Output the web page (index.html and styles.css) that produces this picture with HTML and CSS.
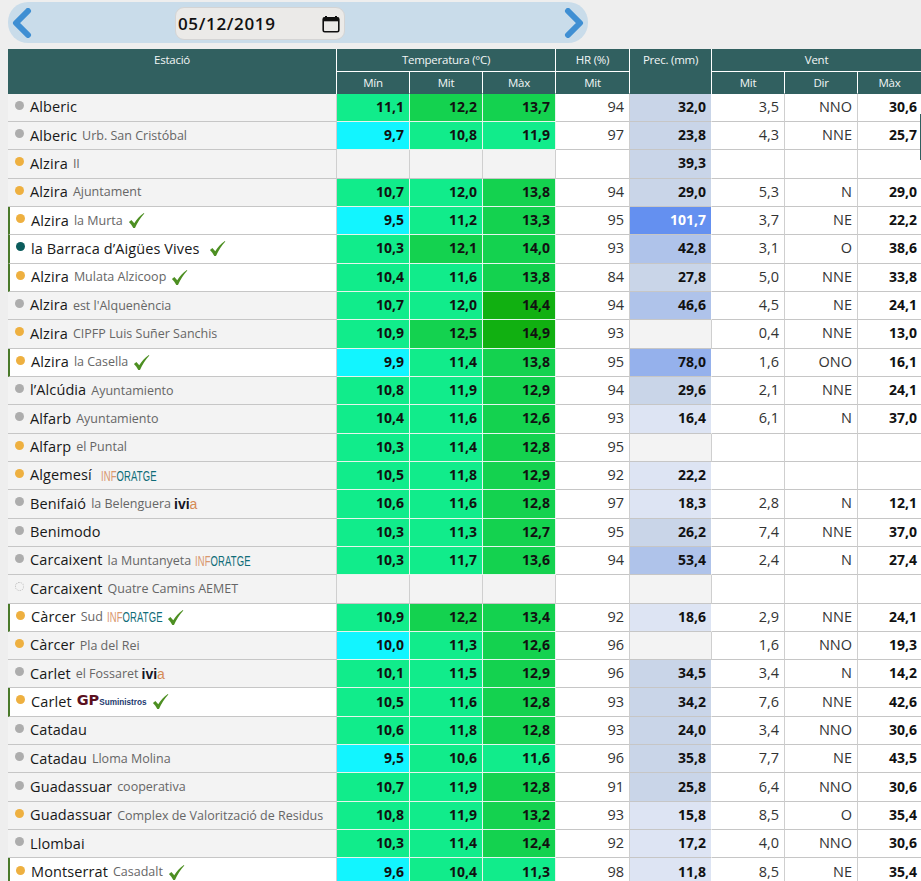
FILE: index.html
```html
<!DOCTYPE html>
<html lang="ca">
<head>
<meta charset="utf-8">
<title>Estacions</title>
<link rel="stylesheet" href="styles.css">
</head>
<body>
<svg class="defs" width="0" height="0" aria-hidden="true"><defs>
<symbol id="ok" viewBox="0 0 18 18"><path d="M1 10.5 L3.6 8.4 L6.6 12 C9 8 12.500 4 16.800 1 L17.300 1.600 C13.200 6 10 11 7.400 17 L5.600 17 C4.400 14.500 2.800 12.300 1 10.500 Z"/></symbol>
</defs></svg>
<nav class="nav">
  <svg class="arrow" viewBox="0 0 20 30"><path d="M16 3 L4 15 L16 27"/></svg>
  <div class="date"><span>05/12/2019</span>
    <svg class="cal" viewBox="0 0 18 18"><path d="M4 1v3M14 1v3" class="cal-p"/><rect x="1.200" y="2.800" width="15.600" height="14" rx="1.500" class="cal-r"/><rect x="1.200" y="2.800" width="15.600" height="3.500" class="cal-f"/></svg>
  </div>
  <svg class="arrow" viewBox="0 0 20 30"><path d="M4 3 L16 15 L4 27"/></svg>
</nav>
<table class="grid">
<colgroup><col class="c-name"><col class="c-n"><col class="c-n"><col class="c-n"><col class="c-h"><col class="c-p"><col class="c-n"><col class="c-n"><col class="c-l"></colgroup>
<thead>
<tr class="h1"><th rowspan="2" class="top">Estació</th><th colspan="3">Temperatura (°C)</th><th>HR (%)</th><th rowspan="2" class="top">Prec. (mm)</th><th colspan="3">Vent</th></tr>
<tr class="h2"><th>Mín</th><th>Mit</th><th>Màx</th><th>Mit</th><th>Mit</th><th>Dir</th><th>Màx</th></tr>
</thead>
<tbody>
<tr><td class="st"><i class="dot g"></i><b>Alberic</b></td><td class="t2">11,1</td><td class="t3">12,2</td><td class="t3">13,7</td><td>94</td><td class="p2">32,0</td><td>3,5</td><td>NNO</td><td class="m">30,6</td></tr>
<tr><td class="st"><i class="dot g"></i><b>Alberic</b><small>Urb. San Cristóbal</small></td><td class="t1">9,7</td><td class="t2">10,8</td><td class="t2">11,9</td><td>97</td><td class="p2">23,8</td><td>4,3</td><td>NNE</td><td class="m">25,7</td></tr>
<tr><td class="st"><i class="dot o"></i><b>Alzira</b><small>II</small></td><td class="t0"></td><td class="t0"></td><td class="t0"></td><td></td><td class="p2">39,3</td><td></td><td></td><td class="m"></td></tr>
<tr><td class="st"><i class="dot o"></i><b>Alzira</b><small>Ajuntament</small></td><td class="t2">10,7</td><td class="t2">12,0</td><td class="t3">13,8</td><td>94</td><td class="p2">29,0</td><td>5,3</td><td>N</td><td class="m">29,0</td></tr>
<tr><td class="st on"><i class="dot o"></i><b>Alzira</b><small>la Murta</small><svg class="ok"><use href="#ok"/></svg></td><td class="t1">9,5</td><td class="t2">11,2</td><td class="t3">13,3</td><td>95</td><td class="p5">101,7</td><td>3,7</td><td>NE</td><td class="m">22,2</td></tr>
<tr><td class="st on"><i class="dot d"></i><b>la Barraca d’Aigües Vives</b><svg class="ok wide"><use href="#ok"/></svg></td><td class="t2">10,3</td><td class="t3">12,1</td><td class="t3">14,0</td><td>93</td><td class="p3">42,8</td><td>3,1</td><td>O</td><td class="m">38,6</td></tr>
<tr><td class="st on"><i class="dot o"></i><b>Alzira</b><small>Mulata Alzicoop</small><svg class="ok"><use href="#ok"/></svg></td><td class="t2">10,4</td><td class="t2">11,6</td><td class="t3">13,8</td><td>84</td><td class="p2">27,8</td><td>5,0</td><td>NNE</td><td class="m">33,8</td></tr>
<tr><td class="st"><i class="dot g"></i><b>Alzira</b><small>est l'Alquenència</small></td><td class="t2">10,7</td><td class="t2">12,0</td><td class="t4">14,4</td><td>94</td><td class="p3">46,6</td><td>4,5</td><td>NE</td><td class="m">24,1</td></tr>
<tr><td class="st"><i class="dot o"></i><b>Alzira</b><small>CIPFP Luis Suñer Sanchis</small></td><td class="t2">10,9</td><td class="t3">12,5</td><td class="t4">14,9</td><td>93</td><td class="p0"></td><td>0,4</td><td>NNE</td><td class="m">13,0</td></tr>
<tr><td class="st on"><i class="dot o"></i><b>Alzira</b><small>la Casella</small><svg class="ok"><use href="#ok"/></svg></td><td class="t1">9,9</td><td class="t2">11,4</td><td class="t3">13,8</td><td>95</td><td class="p4">78,0</td><td>1,6</td><td>ONO</td><td class="m">16,1</td></tr>
<tr><td class="st"><i class="dot g"></i><b>l’Alcúdia</b><small>Ayuntamiento</small></td><td class="t2">10,8</td><td class="t2">11,9</td><td class="t3">12,9</td><td>94</td><td class="p2">29,6</td><td>2,1</td><td>NNE</td><td class="m">24,1</td></tr>
<tr><td class="st"><i class="dot g"></i><b>Alfarb</b><small>Ayuntamiento</small></td><td class="t2">10,4</td><td class="t2">11,6</td><td class="t3">12,6</td><td>93</td><td class="p1">16,4</td><td>6,1</td><td>N</td><td class="m">37,0</td></tr>
<tr><td class="st"><i class="dot o"></i><b>Alfarp</b><small>el Puntal</small></td><td class="t2">10,3</td><td class="t2">11,4</td><td class="t3">12,8</td><td>95</td><td class="p0"></td><td></td><td></td><td class="m"></td></tr>
<tr><td class="st"><i class="dot o"></i><b>Algemesí</b><span class="inf gap"><u>INF</u>ORATGE</span></td><td class="t2">10,5</td><td class="t2">11,8</td><td class="t3">12,9</td><td>92</td><td class="p1">22,2</td><td></td><td></td><td class="m"></td></tr>
<tr><td class="st"><i class="dot g"></i><b>Benifaió</b><small>la Belenguera</small><span class="ivia">ivi<u>a</u></span></td><td class="t2">10,6</td><td class="t2">11,6</td><td class="t3">12,8</td><td>97</td><td class="p1">18,3</td><td>2,8</td><td>N</td><td class="m">12,1</td></tr>
<tr><td class="st"><i class="dot g"></i><b>Benimodo</b></td><td class="t2">10,3</td><td class="t2">11,3</td><td class="t3">12,7</td><td>95</td><td class="p2">26,2</td><td>7,4</td><td>NNE</td><td class="m">37,0</td></tr>
<tr><td class="st"><i class="dot g"></i><b>Carcaixent</b><small>la Muntanyeta</small><span class="inf"><u>INF</u>ORATGE</span></td><td class="t2">10,3</td><td class="t2">11,7</td><td class="t3">13,6</td><td>94</td><td class="p3">53,4</td><td>2,4</td><td>N</td><td class="m">27,4</td></tr>
<tr><td class="st"><i class="dot x"></i><b>Carcaixent</b><small>Quatre Camins AEMET</small></td><td class="t0"></td><td class="t0"></td><td class="t0"></td><td></td><td class="p0"></td><td></td><td></td><td class="m"></td></tr>
<tr><td class="st on"><i class="dot o"></i><b>Càrcer</b><small>Sud</small><span class="inf"><u>INF</u>ORATGE</span><svg class="ok"><use href="#ok"/></svg></td><td class="t2">10,9</td><td class="t3">12,2</td><td class="t3">13,4</td><td>92</td><td class="p1">18,6</td><td>2,9</td><td>NNE</td><td class="m">24,1</td></tr>
<tr><td class="st"><i class="dot o"></i><b>Càrcer</b><small>Pla del Rei</small></td><td class="t1">10,0</td><td class="t2">11,3</td><td class="t3">12,6</td><td>96</td><td class="p0"></td><td>1,6</td><td>NNO</td><td class="m">19,3</td></tr>
<tr><td class="st"><i class="dot g"></i><b>Carlet</b><small>el Fossaret</small><span class="ivia">ivi<u>a</u></span></td><td class="t2">10,1</td><td class="t2">11,5</td><td class="t3">12,9</td><td>96</td><td class="p2">34,5</td><td>3,4</td><td>N</td><td class="m">14,2</td></tr>
<tr><td class="st on"><i class="dot o"></i><b>Carlet</b><span class="gp">GP<em>Suministros</em></span><svg class="ok"><use href="#ok"/></svg></td><td class="t2">10,5</td><td class="t2">11,6</td><td class="t3">12,8</td><td>93</td><td class="p2">34,2</td><td>7,6</td><td>NNE</td><td class="m">42,6</td></tr>
<tr><td class="st"><i class="dot g"></i><b>Catadau</b></td><td class="t2">10,6</td><td class="t2">11,8</td><td class="t3">12,8</td><td>93</td><td class="p2">24,0</td><td>3,4</td><td>NNO</td><td class="m">30,6</td></tr>
<tr><td class="st"><i class="dot g"></i><b>Catadau</b><small>Lloma Molina</small></td><td class="t1">9,5</td><td class="t2">10,6</td><td class="t2">11,6</td><td>96</td><td class="p2">35,8</td><td>7,7</td><td>NE</td><td class="m">43,5</td></tr>
<tr><td class="st"><i class="dot g"></i><b>Guadassuar</b><small>cooperativa</small></td><td class="t2">10,7</td><td class="t2">11,9</td><td class="t3">12,8</td><td>91</td><td class="p2">25,8</td><td>6,4</td><td>NNO</td><td class="m">30,6</td></tr>
<tr><td class="st"><i class="dot o"></i><b>Guadassuar</b><small>Complex de Valorització de Residus</small></td><td class="t2">10,8</td><td class="t2">11,9</td><td class="t3">13,2</td><td>93</td><td class="p1">15,8</td><td>8,5</td><td>O</td><td class="m">35,4</td></tr>
<tr><td class="st"><i class="dot g"></i><b>Llombai</b></td><td class="t2">10,3</td><td class="t2">11,4</td><td class="t3">12,4</td><td>92</td><td class="p1">17,2</td><td>4,0</td><td>NNO</td><td class="m">30,6</td></tr>
<tr><td class="st on"><i class="dot o"></i><b>Montserrat</b><small>Casadalt</small><svg class="ok"><use href="#ok"/></svg></td><td class="t1">9,6</td><td class="t2">10,4</td><td class="t2">11,3</td><td>98</td><td class="p1">11,8</td><td>8,5</td><td>NE</td><td class="m">35,4</td></tr>
</tbody>
</table>
<div class="edge"></div>
</body>
</html>
```
FILE: styles.css
```css
html, body { margin: 0; height: 100%; overflow: hidden; }
body { background: #eeeeee; font-family: "Open Sans", sans-serif; color: #222; padding: 2px 0 0 8px; box-sizing: border-box; }
.defs { position: absolute; }
.edge { position: absolute; left: 920px; top: 114px; width: 1px; height: 46px; background: #2f6060; }
.nav { width: 580px; height: 41px; background: #c9dcea; border-radius: 20px; display: flex; align-items: center; justify-content: space-between; padding: 0 4px; box-sizing: border-box; margin-bottom: 6px; position: relative; }
.arrow { width: 20px; height: 30px; fill: none; stroke: #3f8fd3; stroke-width: 6; stroke-linecap: round; stroke-linejoin: round; }
.date { position: absolute; left: 167px; top: 5px; width: 170px; height: 33px; background: #ebeae8; border: 1px solid #d4d4d4; border-radius: 9px; box-sizing: border-box; display: flex; align-items: center; justify-content: space-between; padding: 0 4px 0 2px; font-size: 17px; font-weight: 600; color: #111; letter-spacing: .65px; }
.cal { width: 18px; height: 18px; }
.cal-p { stroke: #111; stroke-width: 2; fill: none; }
.cal-r { fill: none; stroke: #111; stroke-width: 1.600; }
.cal-f { fill: #111; }
.grid { border-collapse: separate; border-spacing: 0; table-layout: fixed; width: 913px; }
.c-name { width: 329px; } .c-n { width: 73px; } .c-h { width: 74px; } .c-p { width: 82px; } .c-l { width: 63px; }
thead th { background: #316060; color: #f2f6f6; font-weight: 400; font-size: 11.500px; letter-spacing: -.25px; padding: 0; border-right: 1px solid #fff; border-bottom: 1px solid #fff; text-align: center; vertical-align: middle; }
thead th.top { vertical-align: top; padding-top: 3px; line-height: 16px; border-bottom: 0; }
.h1 { height: 23px; }
.h1 th { padding-bottom: 2px; }
.h2 { height: 21.600px; }
.h2 th { border-bottom-color: #316060; padding-top: 1px; }
thead th:last-child { border-right: 0; }
tbody tr { height: 28.330px; }
tbody td { padding: 0 5px 1px 0; background: #fff; border-right: 1px solid #cfcfcf; border-bottom: 1px solid #c6c6c6; font-size: 14.500px; text-align: right; vertical-align: middle; color: #333; white-space: nowrap; box-sizing: border-box; height: 28.330px; line-height: 18px; }
td.t1, td.t2, td.t3, td.t4, td.p1, td.p2, td.p3, td.p4, td.p5, td.m { font-weight: 700; color: #111; font-size: 14px; }
td.t1, td.t2, td.t3, td.t4 { border-right-color: #e6f5ec; border-bottom-color: #e6f5ec; }
td.t0 { background: #f3f3f3; }
td.t1 { background: #12f5ff; }
td.t2 { background: #11ec8b; }
td.t3 { background: #14d24f; }
td.t4 { background: #11b011; }
td.p0 { background: #f3f3f3; border-right-color: #cfcfcf; }
td.p1 { background: #dde4f3; }
td.p2 { background: #c9d5e8; }
td.p3 { background: #afc3ea; }
td.p4 { background: #95b1ec; }
td.p5 { background: #6490f0; color: #fff; }
td.p1, td.p2, td.p3, td.p4, td.p5 { border-right-color: #fff; }
td.m { padding-right: 4px; border-right: 0; }
td.st { background: #f3f3f3; text-align: left; padding: 0 0 1px 7px; color: #666; overflow: hidden; }
td.st.on { background: #fff; border-left: 2px solid #4a7a2a; padding-left: 6px; }
td.st > * { vertical-align: middle; }
.dot { display: inline-block; width: 9px; height: 9px; border-radius: 50%; margin: -4px 6px 0 0; }
.dot.g { background: #adadad; }
.dot.o { background: #eeb040; }
.dot.d { background: #0b5c5c; }
.dot.x { border: 1px dotted #bbb; box-sizing: border-box; }
.st b { font-weight: 400; font-size: 14.500px; color: #181818; letter-spacing: .1px; }
.st small { font-size: 12.500px; color: #666; margin-left: 5px; }
.ok { width: 17px; height: 17px; fill: #4d8f22; margin-left: 5px; }
.ok.wide { margin-left: 10px; }
.inf { display: inline-block; width: 55px; font-family: "Liberation Sans", sans-serif; font-size: 15.500px; color: #0f6c78; margin-left: 4px; transform: scaleX(.61); transform-origin: left center; white-space: nowrap; letter-spacing: .2px; line-height: 18px; }
.inf.gap { margin-left: 9px; }
.inf u { color: #d9986e; text-decoration: none; }
.ivia { font-family: "Liberation Sans", sans-serif; font-size: 14px; font-weight: 700; color: #151525; margin-left: 3px; }
.ivia u { color: #d58a55; text-decoration: none; font-weight: 400; }
.gp { font-family: "DejaVu Sans", sans-serif; font-size: 14.500px; font-weight: 700; color: #5a1020; margin: 3px 0 0 5px; }
.gp em { font-family: "Liberation Sans", sans-serif; font-style: normal; font-size: 8.200px; color: #1c3a6e; }
```
